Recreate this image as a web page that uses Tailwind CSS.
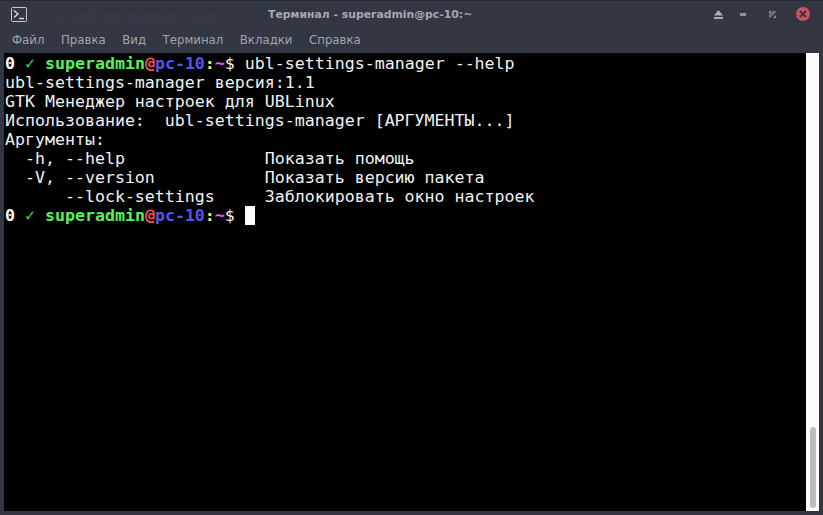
<!DOCTYPE html>
<html>
<head>
<meta charset="utf-8">
<script src="https://cdn.jsdelivr.net/npm/@tailwindcss/browser@4"></script>
</head>
<body class="m-0 bg-[#323742]">
<div class="flex flex-col w-[823px] h-[515px] overflow-hidden bg-[#323742] font-['DejaVu_Sans',sans-serif]">
  <div class="relative h-[30px] shrink-0 border-t border-[#262a32] flex items-center pl-[268px]">
    <svg class="absolute left-[11px] top-[6px]" width="17" height="16" viewBox="0 0 17 16" fill="none"><rect x="0.5" y="0.5" width="15" height="14" rx="1" stroke="#c3c8d2"/><path d="M3 3.5l4 3.5-4 3.5" stroke="#d8dce4" stroke-width="1.4"/><path d="M8 11.5h5" stroke="#d8dce4" stroke-width="1.4"/></svg>
    <span class="absolute left-[52px] top-[7px] text-[11.5px] tracking-[0.3px] leading-[18px] text-[#383d48] whitespace-nowrap">ubl-settings-manager_ru.po</span>
    <span class="text-[10.85px] font-bold leading-[18px] text-[#a3a8b3] mt-[-1px] whitespace-nowrap">Терминал - superadmin@pc-10:~</span>
    <svg class="absolute left-[713px] top-[9px]" width="11" height="9" viewBox="0 0 11 9"><path d="M5.5 0L10 5.5H1z" fill="#a9aeb9"/><rect x="1" y="7" width="9" height="2" fill="#a9aeb9"/></svg>
    <div class="absolute left-[740px] top-[12px] w-[6px] h-[3px] bg-[#8d919c]"></div>
    <svg class="absolute left-[769px] top-[10px]" width="7" height="7" viewBox="0 0 7 7"><path d="M0 3L3 0H0zM7 4L4 7H7z" fill="#8d919c"/><path d="M1 7L7 1V0H4L0 4V7z" fill="#6f737e"/></svg>
    <div class="absolute left-[796px] top-[6px] w-[14px] h-[14px] rounded-full bg-[#c9525d] flex items-center justify-center">
      <svg width="8" height="8" viewBox="0 0 8 8"><path d="M1 1l6 6M7 1l-6 6" stroke="#323742" stroke-width="2"/></svg>
    </div>
  </div>
  <nav class="h-[23px] shrink-0 flex items-start pl-[12px] text-[11.75px] leading-[21px] text-[#9fa4af] whitespace-nowrap">
    <span class="mr-[16.5px]">Файл</span><span class="mr-[16.5px]">Правка</span><span class="mr-[16.5px]">Вид</span><span class="mr-[16.5px]">Терминал</span><span class="mr-[16.5px]">Вкладки</span><span>Справка</span>
  </nav>
  <div class="flex h-[458px] shrink-0 ml-[4px] mr-[4px]">
    <pre class="flex-1 bg-black text-[#f2f2f2] font-['DejaVu_Sans_Mono',monospace] text-[16.6px] leading-[19px] m-0 pt-[1px] pl-[1px] overflow-hidden"><span class="font-bold text-white">0</span> <span class="text-[#3fdc45]">✓</span> <span class="font-bold text-[#55f255]">superadmin</span><span class="font-bold text-[#f25555]">@</span><span class="font-bold text-[#5555f2]">pc-10</span><span class="font-bold text-[#f2f255]">:</span><span class="font-bold text-[#f255f2]">~</span>$ ubl-settings-manager --help
ubl-settings-manager версия:1.1
GTK Менеджер настроек для UBLinux
Использование:  ubl-settings-manager [АРГУМЕНТЫ...]
Аргументы:
  -h, --help              Показать помощь
  -V, --version           Показать версию пакета
      --lock-settings     Заблокировать окно настроек
<span class="font-bold text-white">0</span> <span class="text-[#3fdc45]">✓</span> <span class="font-bold text-[#55f255]">superadmin</span><span class="font-bold text-[#f25555]">@</span><span class="font-bold text-[#5555f2]">pc-10</span><span class="font-bold text-[#f2f255]">:</span><span class="font-bold text-[#f255f2]">~</span>$ <span class="inline-block w-[10px] h-[19px] bg-white align-top"></span></pre>
    <div class="relative w-[13px] bg-[#fcfcfc]">
      <div class="absolute left-[4px] top-[374px] w-[6px] h-[81px] rounded-full bg-[#bcbcc2]"></div>
    </div>
  </div>
</div>
</body>
</html>
